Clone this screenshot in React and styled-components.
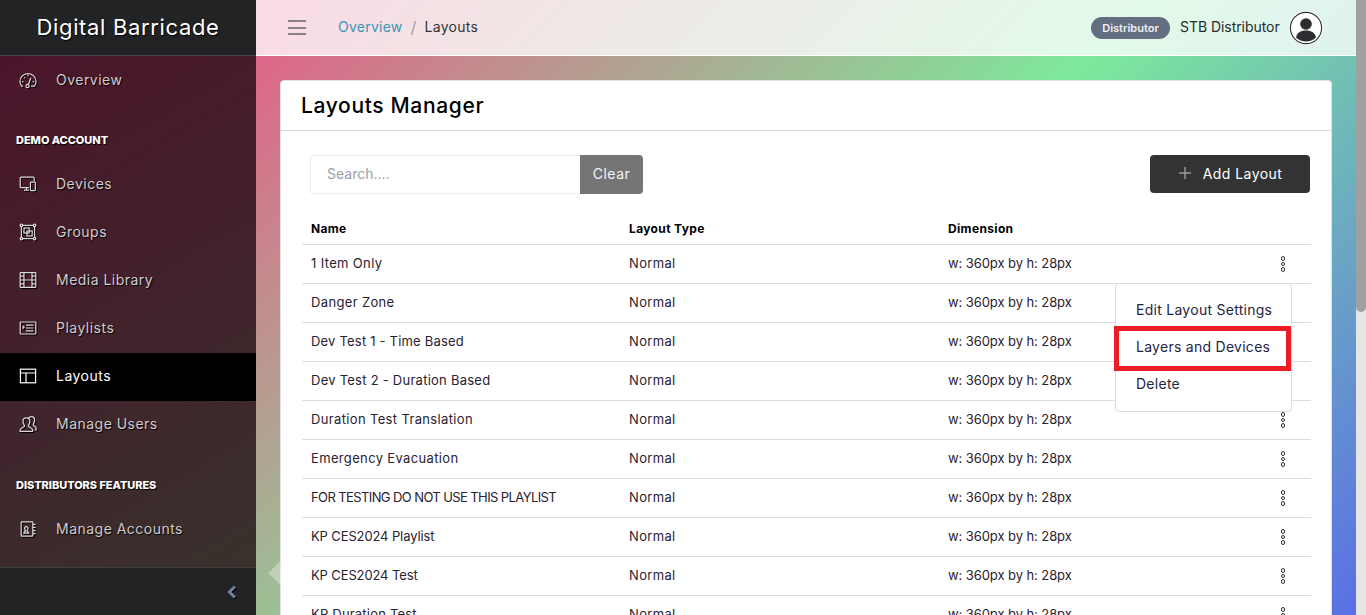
import React from "react";
import styled, { createGlobalStyle } from "styled-components";

const GlobalStyle = createGlobalStyle`
  html, body, #root { margin: 0; height: 100%; }
  body { font-family: Inter, "Open Sans", sans-serif; color: #222; overflow: hidden; }
  * { box-sizing: border-box; }
`;

const Shell = styled.div`
  display: flex;
  height: 100vh;
  overflow: hidden;
`;

const Sidebar = styled.aside`
  width: 256px;
  flex: none;
  display: flex;
  flex-direction: column;
  background: linear-gradient(150deg, #4c132a 0%, #43202c 45%, #37342c 100%);
`;

const Brand = styled.div`
  height: 56px;
  flex: none;
  display: flex;
  align-items: center;
  justify-content: center;
  padding-bottom: 2px;
  background: #212325;
  border-bottom: 1px solid #45474a;
  color: #fff;
  font-size: 22px;
  letter-spacing: 0.65px;
  text-shadow: 1px 1px 1px #000;
`;

const Nav = styled.nav`
  flex: 1;
  display: flex;
  flex-direction: column;
  padding-top: 1px;
`;

const NavItem = styled.div`
  height: 48px;
  flex: none;
  display: flex;
  align-items: center;
  gap: 19px;
  padding: 0 0 2px 19px;
  font-size: 14px;
  letter-spacing: 0.48px;
  color: ${(p) => (p.$active ? "#fff" : "#cfcbcd")};
  background: ${(p) => (p.$active ? "#000" : "transparent")};
  text-shadow: ${(p) => (p.$active ? "none" : "1px 1px 1px #000")};
  svg {
    flex: none;
    filter: ${(p) => (p.$active ? "none" : "drop-shadow(1px 1px 0.5px #000)")};
  }
`;

const NavLabel = styled.span`
  padding-bottom: 2px;
`;

const NavHeading = styled.div`
  height: 16px;
  margin: ${(p) => p.$top}px 0 13px;
  padding-left: 16px;
  display: flex;
  align-items: center;
  color: #fff;
  font-size: 11px;
  font-weight: 800;
  letter-spacing: -0.05px;
  text-shadow: 1px 1px 1px #000;
`;

const SidebarFoot = styled.div`
  height: 48px;
  flex: none;
  display: flex;
  align-items: center;
  justify-content: flex-end;
  padding-right: 17px;
  background: #212325;
  border-top: 1px solid #3e3f41;
  svg { filter: drop-shadow(1px 1px 0.5px #000); }
`;

const Main = styled.div`
  flex: 1;
  min-width: 0;
  position: relative;
  overflow: hidden;
  display: flex;
`;

const Page = styled.div`
  flex: 1;
  min-width: 0;
  overflow: hidden;
  background: linear-gradient(135deg, #e55d87 0%, #7de99b 52%, #5a6ee6 100%);
`;

const ScrollTrack = styled.div`
  width: 10px;
  flex: none;
  background: #e6e6e6;
`;

const ScrollThumb = styled.div`
  height: 312px;
  background: #a0a0a0;
  border-radius: 0 0 5px 5px;
`;

const TopBar = styled.header`
  height: 56px;
  display: flex;
  align-items: center;
  padding: 0 33px 0 32px;
  background: rgba(255, 255, 255, 0.78);
  border-bottom: 1px solid #fff;
`;

const Burger = styled.span`
  width: 18px;
  height: 15px;
  margin-right: 32px;
  display: flex;
  flex-direction: column;
  justify-content: space-between;
  i { display: block; height: 2px; background: #8b7f88; }
`;

const Crumbs = styled.div`
  display: flex;
  align-items: center;
  gap: 8px;
  padding-bottom: 2px;
  font-size: 14px;
  letter-spacing: 0.25px;
  color: #333;
`;

const CrumbLink = styled.span`
  color: #3b94b5;
`;

const CrumbSep = styled.span`
  color: #9a9ea3;
  font-size: 16px;
`;

const UserArea = styled.div`
  margin-left: auto;
  display: flex;
  align-items: center;
`;

const RoleBadge = styled.span`
  width: 79px;
  height: 22px;
  border-radius: 11px;
  background: #646e82;
  color: #eef0f3;
  font-size: 11px;
  font-weight: 600;
  display: flex;
  align-items: center;
  justify-content: center;
  margin-right: 10px;
`;

const UserName = styled.span`
  width: 100px;
  padding-bottom: 2px;
  font-size: 14px;
  letter-spacing: -0.05px;
  color: #2a2a2a;
  margin-right: 9px;
  white-space: nowrap;
`;

const Content = styled.main`
  padding: 24px;
`;

const Card = styled.section`
  background: #fff;
  border: 1px solid #e0e0e6;
  border-radius: 4px;
  position: relative;
`;

const CardHead = styled.div`
  height: 50px;
  display: flex;
  align-items: center;
  padding-left: 20px;
  border-bottom: 1px solid #d8d8e0;
  font-size: 21px;
  font-weight: 500;
  letter-spacing: 0.65px;
  color: #000;
`;

const CardBody = styled.div`
  padding: 24px 20px 0 21px;
`;

const Toolbar = styled.div`
  display: flex;
  justify-content: space-between;
  align-items: flex-start;
  padding: 0 1px 0 8px;
  margin-bottom: 16px;
`;

const SearchGroup = styled.div`
  display: flex;
  height: 39px;
`;

const SearchInput = styled.input`
  width: 270px;
  height: 39px;
  border: 1px solid #ececec;
  border-right: none;
  border-radius: 4px 0 0 4px;
  padding: 0 16px 2px;
  font: 14px Inter, sans-serif;
  outline: none;
  &::placeholder { color: #9aa0a8; opacity: 1; }
`;

const ClearButton = styled.button`
  width: 63px;
  padding: 0 0 2px;
  border: none;
  border-radius: 0 4px 4px 0;
  background: #757575;
  color: #f4f4f4;
  font: 14px Inter, sans-serif;
  letter-spacing: 0.5px;
`;

const AddButton = styled.button`
  width: 160px;
  height: 38px;
  padding: 0 0 2px;
  border: none;
  border-radius: 4px;
  background: #333;
  color: #fff;
  font: 14px Inter, sans-serif;
  letter-spacing: 0.45px;
  display: flex;
  align-items: center;
  justify-content: center;
  gap: 11px;
`;

const Table = styled.div`
  letter-spacing: 0.35px;
`;

const Row = styled.div`
  display: grid;
  grid-template-columns: 318px 319px 1fr 57px;
  align-items: center;
  height: ${(p) => (p.$head ? "35px" : "39px")};
  padding: ${(p) => (p.$head ? "2px 0 0 9px" : "0 0 2px 9px")};
  border-bottom: 1px solid #dedede;
  font-weight: ${(p) => (p.$head ? 700 : 400)};
  font-size: ${(p) => (p.$head ? "12px" : "13px")};
  color: ${(p) => (p.$head ? "#000" : "#2a2230")};
`;

const NameCell = styled.span`
  letter-spacing: ${(p) => p.$spacing}px;
`;

const SizeCell = styled.span`
  letter-spacing: -0.08px;
`;

const Dots = styled.span`
  display: flex;
  flex-direction: column;
  align-items: center;
  width: 5px;
  gap: 1px;
  margin: 2px 0 0 26.5px;
  i {
    display: block;
    width: 4.7px;
    height: 4.7px;
    border: 1.5px solid #333;
    border-radius: 50%;
  }
`;

const Menu = styled.div`
  position: absolute;
  left: 834px;
  top: 202px;
  width: 177px;
  height: 129px;
  padding-top: 8px;
  background: #fff;
  border: 1px solid #dcdcdc;
  border-radius: 4px;
`;

const MenuItem = styled.div`
  height: 37px;
  display: flex;
  align-items: center;
  padding: 0 0 2px 20px;
  font-size: 14px;
  letter-spacing: 0.27px;
  color: #1f2440;
`;

const Highlight = styled.div`
  position: absolute;
  left: 833px;
  top: 245px;
  width: 177px;
  height: 45px;
  border: 5px solid #ed1c24;
`;

const SideArrow = styled.span`
  position: absolute;
  left: 16px;
  top: 563.5px;
  width: 18px;
  height: 18px;
  transform: rotate(45deg);
  background: rgba(255, 255, 255, 0.32);
`;

const Icon = ({ children, stroke = "#dcd8da" }) => (
  <svg width="18" height="18" viewBox="0 0 18 18" fill="none" stroke={stroke} strokeWidth="1.2">
    {children}
  </svg>
);

const overview = {
  label: "Overview",
  icon: (
    <>
      <path d="M4 15.2H2.6A7.6 7.6 0 0 1 1 10.6a8 8 0 0 1 16 0 7.6 7.6 0 0 1-1.6 4.6H12" />
      <path d="M9.2 14l2.6-7.2M3 10.6h1.4M15 10.6h-1.4M5 6.2l1 1M9 3.8v1.4" />
      <circle cx="8.6" cy="15" r="1.6" />
    </>
  ),
};

const accountItems = [
  {
    label: "Devices",
    icon: (
      <>
        <path d="M10 12.6H2.2a1 1 0 0 1-1-1V3.2a1 1 0 0 1 1-1h12a1 1 0 0 1 1 1v3" />
        <path d="M5 15.2h5M7.5 12.6v2.6" />
        <rect x="11.4" y="7.2" width="5" height="8.4" rx="0.8" />
      </>
    ),
  },
  {
    label: "Groups",
    icon: (
      <>
        <rect x="2.4" y="2.4" width="13.2" height="13.2" />
        <circle cx="2.4" cy="2.4" r="1.3" fill="#4a1c2c" />
        <circle cx="15.6" cy="2.4" r="1.3" fill="#4a1c2c" />
        <circle cx="2.4" cy="15.6" r="1.3" fill="#4a1c2c" />
        <circle cx="15.6" cy="15.6" r="1.3" fill="#4a1c2c" />
        <rect x="5" y="5" width="5.2" height="5" />
        <rect x="8" y="8" width="5.2" height="5" />
      </>
    ),
  },
  {
    label: "Media Library",
    icon: (
      <>
        <rect x="1.2" y="1.6" width="15.6" height="14.8" rx="0.6" />
        <path d="M5 1.6v14.8M13 1.6v14.8M5 9h8M1.2 5.2H5M1.2 9H5M1.2 12.8H5M13 5.2h3.8M13 9h3.8M13 12.8h3.8" />
      </>
    ),
  },
  {
    label: "Playlists",
    icon: (
      <>
        <rect x="1.2" y="3" width="15.6" height="12" rx="0.8" />
        <path d="M7 6.2h7.4M7 9h7.4M7 11.8h7.4" />
        <path d="M3.6 6v4.4L6 8.2z" fill="#dcd8da" stroke="none" />
      </>
    ),
  },
  {
    label: "Layouts",
    active: true,
    icon: (
      <>
        <rect x="1.4" y="2.2" width="15.2" height="13.6" />
        <path d="M1.4 6h15.2M7 6v9.8" />
      </>
    ),
  },
  {
    label: "Manage Users",
    icon: (
      <>
        <path d="M1.2 16.4v-1.6c0-1.6 3.4-2.4 4.2-3.4.4-.6-.1-1.2-.6-2-.5-.9-.8-1.8-.8-3 0-2 1.4-3.6 3.4-3.6s3.4 1.6 3.4 3.6c0 1.2-.3 2.1-.8 3-.5.8-1 1.4-.6 2 .8 1 4.2 1.8 4.2 3.4v1.6z" />
        <path d="M9.4 3.2c.7-1 1.6-1.6 2.8-1.6 2 0 3.4 1.6 3.4 3.6 0 1.2-.3 2.1-.8 3-.4.8-.9 1.4-.5 2 .6.8 2.8 1.6 2.8 3v1.8h-1.6" />
      </>
    ),
  },
];

const manageAccounts = {
  label: "Manage Accounts",
  icon: (
    <>
      <rect x="2.2" y="1.8" width="11.6" height="14.4" rx="0.6" />
      <path d="M14 4.4h2.6M14 7.4h2.6M14 10.6h2.6M14 13.6h2.6M4.8 13.2c0-1.2 1.2-1.6 1.8-2.2-.8-.8-1-1.4-1-2.4 0-1.2.6-2 1.6-2s1.8.8 1.8 2c0 1-.4 1.6-1 2.4.6.6 1.8 1 1.8 2.2z" />
    </>
  ),
};

const layouts = [
  { name: "1 Item Only", spacing: 0.35 },
  { name: "Danger Zone", spacing: 0.35 },
  { name: "Dev Test 1 - Time Based", spacing: 0.2 },
  { name: "Dev Test 2 - Duration Based", spacing: 0.25 },
  { name: "Duration Test Translation", spacing: 0.35 },
  { name: "Emergency Evacuation", spacing: 0.35 },
  { name: "FOR TESTING DO NOT USE THIS PLAYLIST", spacing: -0.6 },
  { name: "KP CES2024 Playlist", spacing: -0.12 },
  { name: "KP CES2024 Test", spacing: -0.12 },
  { name: "KP Duration Test", spacing: 0.2 },
];

const renderItem = (item) => (
  <NavItem key={item.label} $active={item.active}>
    <Icon stroke={item.active ? "#fff" : "#dcd8da"}>{item.icon}</Icon>
    <NavLabel>{item.label}</NavLabel>
  </NavItem>
);

export default function App() {
  return (
    <Shell>
      <GlobalStyle />
      <Sidebar>
        <Brand>Digital Barricade</Brand>
        <Nav>
          {renderItem(overview)}
          <NavHeading $top={27}>DEMO ACCOUNT</NavHeading>
          {accountItems.map(renderItem)}
          <NavHeading $top={28}>DISTRIBUTORS FEATURES</NavHeading>
          {renderItem(manageAccounts)}
        </Nav>
        <SidebarFoot>
          <svg width="14" height="14" viewBox="0 0 14 14" fill="none" stroke="#71819a" strokeWidth="3">
            <path d="M10 1.5L4.4 7 10 12.5" />
          </svg>
        </SidebarFoot>
      </Sidebar>
      <Main>
        <Page>
          <TopBar>
            <Burger><i /><i /><i /></Burger>
            <Crumbs>
              <CrumbLink>Overview</CrumbLink>
              <CrumbSep>/</CrumbSep>
              <span>Layouts</span>
            </Crumbs>
            <UserArea>
              <RoleBadge>Distributor</RoleBadge>
              <UserName>STB Distributor</UserName>
              <svg width="34" height="34" viewBox="0 0 34 34">
                <circle cx="17" cy="17" r="17" fill="#fff" />
                <circle cx="17" cy="17" r="15.6" fill="none" stroke="#2b2d31" strokeWidth="1.1" />
                <circle cx="17" cy="13" r="5.8" fill="#2b2d31" />
                <path d="M7 26.5c.8-4.6 4.6-7 10-7s9.2 2.4 10 7a14.8 14.8 0 0 1-20 0z" fill="#2b2d31" />
              </svg>
            </UserArea>
          </TopBar>
          <Content>
            <Card>
              <CardHead>Layouts Manager</CardHead>
              <CardBody>
                <Toolbar>
                  <SearchGroup>
                    <SearchInput placeholder="Search...." />
                    <ClearButton>Clear</ClearButton>
                  </SearchGroup>
                  <AddButton>
                    <svg width="14" height="14" viewBox="0 0 14 14" stroke="#9a9a9a" strokeWidth="1.4">
                      <path d="M7 1v12M1 7h12" />
                    </svg>
                    Add Layout
                  </AddButton>
                </Toolbar>
                <Table>
                  <Row $head>
                    <span>Name</span>
                    <span>Layout Type</span>
                    <span>Dimension</span>
                  </Row>
                  {layouts.map((row) => (
                    <Row key={row.name}>
                      <NameCell $spacing={row.spacing}>{row.name}</NameCell>
                      <span>Normal</span>
                      <SizeCell>w: 360px by h: 28px</SizeCell>
                      <Dots><i /><i /><i /></Dots>
                    </Row>
                  ))}
                </Table>
              </CardBody>
              <Menu>
                <MenuItem>Edit Layout Settings</MenuItem>
                <MenuItem>Layers and Devices</MenuItem>
                <MenuItem>Delete</MenuItem>
              </Menu>
              <Highlight />
            </Card>
          </Content>
        </Page>
        <ScrollTrack>
          <ScrollThumb />
        </ScrollTrack>
        <SideArrow />
      </Main>
    </Shell>
  );
}
